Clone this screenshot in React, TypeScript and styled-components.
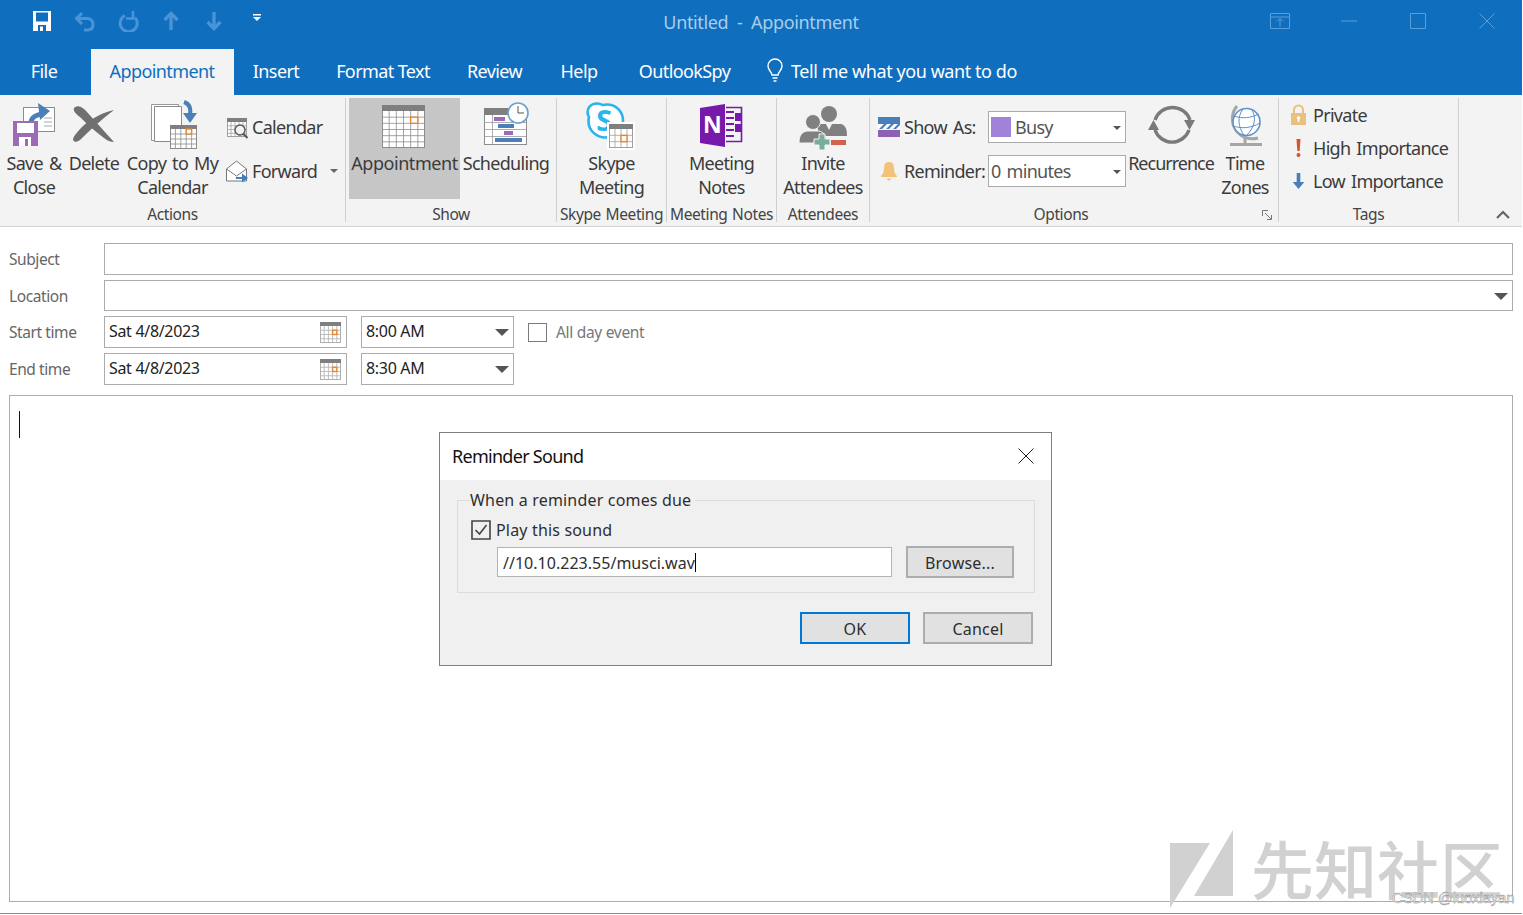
import React from "react";
import styled, { createGlobalStyle } from "styled-components";

const Global = createGlobalStyle`
  html, body { margin: 0; padding: 0; background: #fff; }
  body { font-family: "Noto Sans", "Open Sans", sans-serif; color: #3b3b3b; }
  * { box-sizing: border-box; }
`;

const Window = styled.div`
  position: relative;
  width: 1522px;
  height: 914px;
  background: #fff;
  border-bottom: 1px solid #8a8a8a;
  overflow: hidden;
  display: flex;
  flex-direction: column;
`;

/* ---------- title bar ---------- */
const TitleBar = styled.div`
  height: 49px;
  background: #106ebe;
  display: grid;
  grid-template-columns: 1fr auto 1fr;
  align-items: center;
`;
const Qat = styled.div`
  display: flex;
  gap: 21px;
  padding: 0 0 7px 31px;
`;
const QatIcon = styled.svg`
  width: 22px;
  height: 22px;
  display: block;
`;
const WindowTitle = styled.div`
  font-size: 18px;
  color: #a9cdea;
  white-space: pre;
  padding-bottom: 6px;
  letter-spacing: -0.35px;
`;
const WindowButtons = styled.div`
  display: flex;
  justify-content: flex-end;
  padding: 0 1px 8px 0;
`;
const WindowBtn = styled.div`
  width: 69px;
  height: 22px;
  display: flex;
  align-items: center;
  justify-content: center;
`;

/* ---------- tabs ---------- */
const TabBar = styled.div`
  height: 46px;
  background: #106ebe;
  display: flex;
  align-items: stretch;
`;
const Tab = styled.div<{ $w: number; $active?: boolean; $pr?: number }>`
  width: ${(p) => p.$w}px;
  display: flex;
  align-items: center;
  justify-content: center;
  font-size: 18px;
  letter-spacing: -0.6px;
  white-space: nowrap;
  padding-bottom: 2px;
  padding-right: ${(p) => p.$pr ?? 0}px;
  color: ${(p) => (p.$active ? "#106ebe" : "#fff")};
  background: ${(p) => (p.$active ? "#f3f3f3" : "transparent")};
`;
const TellMe = styled.div`
  display: flex;
  align-items: center;
  gap: 7px;
  margin-left: 14px;
  font-size: 18px;
  letter-spacing: -0.43px;
  color: #fff;
  padding-bottom: 2px;
`;

/* ---------- ribbon ---------- */
const Ribbon = styled.div`
  height: 132px;
  background: #f3f3f3;
  border-bottom: 1px solid #d2d2d2;
  padding-top: 3px;
  display: flex;
  align-items: flex-start;
  font-size: 18px;
  letter-spacing: -0.7px;
  word-spacing: 2px;
  color: #3b3b3b;
`;
const Divider = styled.div`
  width: 1px;
  height: 124px;
  background: #d0d0d0;
  flex: none;
`;
const Group = styled.div<{ $w: number }>`
  position: relative;
  width: ${(p) => p.$w}px;
  height: 128px;
  flex: none;
  display: flex;
  flex-direction: column;
`;
const GroupBody = styled.div<{ $pl?: number }>`
  height: 104px;
  display: flex;
  padding-left: ${(p) => p.$pl ?? 0}px;
`;
const GroupLabel = styled.div<{ $pr?: number }>`
  height: 24px;
  line-height: 24px;
  font-size: 15.5px;
  letter-spacing: -0.4px;
  word-spacing: 1px;
  text-align: center;
  white-space: nowrap;
  padding-right: ${(p) => p.$pr ?? 0}px;
  color: #444;
`;
const LargeBtn = styled.div<{ $w: number; $on?: boolean }>`
  width: ${(p) => p.$w}px;
  height: 101px;
  flex: none;
  display: flex;
  flex-direction: column;
  align-items: center;
  background: ${(p) => (p.$on ? "#c6c6c6" : "transparent")};
`;
const Art = styled.svg`
  display: block;
  height: 54px;
  flex: none;
  overflow: visible;
`;
const LargeText = styled.div<{ $ls?: number }>`
  margin-top: -1px;
  line-height: 24px;
  text-align: center;
  white-space: nowrap;
  ${(p) => (p.$ls !== undefined ? `letter-spacing: ${p.$ls}px;` : "")}
`;
const SmallCol = styled.div`
  display: flex;
  flex-direction: column;
  margin-left: 5px;
  padding-top: 7px;
`;
const SmallRow = styled.div`
  height: 44px;
  display: flex;
  align-items: center;
  gap: 4px;
  white-space: nowrap;
`;
const SmallIcon = styled.svg`
  width: 22px;
  height: 24px;
  display: block;
  flex: none;
  overflow: visible;
`;
const TinyCaret = styled.span`
  width: 0;
  height: 0;
  margin-left: 9px;
  border-left: 4px solid transparent;
  border-right: 4px solid transparent;
  border-top: 4px solid #666;
`;
const OptionCol = styled.div`
  display: flex;
  flex-direction: column;
  gap: 12px;
  padding-top: 13px;
`;
const OptionRow = styled.div`
  height: 32px;
  display: flex;
  align-items: center;
`;
const OptionIcon = styled.svg`
  width: 26px;
  height: 24px;
  flex: none;
  display: block;
`;
const OptionLabel = styled.div`
  width: 84px;
  white-space: nowrap;
`;
const RibbonSelect = styled.div`
  width: 138px;
  height: 32px;
  background: #fff;
  border: 1px solid #ababab;
  display: flex;
  align-items: center;
  padding-left: 2px;
  color: #555;
  position: relative;
`;
const Swatch = styled.span`
  width: 20px;
  height: 20px;
  background: #a083d8;
  margin-right: 4px;
`;
const SelectCaret = styled.span`
  position: absolute;
  right: 4px;
  top: 14px;
  border-left: 4px solid transparent;
  border-right: 4px solid transparent;
  border-top: 4px solid #555;
`;
const Launcher = styled.svg`
  position: absolute;
  right: 6px;
  bottom: 6px;
  width: 10px;
  height: 10px;
`;
const TagCol = styled.div`
  display: flex;
  flex-direction: column;
  padding-top: 0;
`;
const TagRow = styled.div`
  height: 33px;
  display: flex;
  align-items: center;
  gap: 6px;
  white-space: nowrap;
`;
const TagIcon = styled.svg`
  width: 17px;
  height: 22px;
  display: block;
  flex: none;
`;
const CollapseArea = styled.div`
  flex: 1;
  height: 128px;
  display: flex;
  justify-content: flex-end;
  align-items: flex-end;
  padding: 0 12px 7px 0;
`;

/* ---------- form ---------- */
const Form = styled.div`
  flex: 1;
  display: flex;
  flex-direction: column;
  gap: 5px;
  padding: 16px 9px 11px 9px;
  min-height: 0;
`;
const FormRow = styled.div<{ $h?: number }>`
  display: flex;
  align-items: center;
  height: ${(p) => p.$h ?? 32}px;
  flex: none;
`;
const FieldLabel = styled.div`
  width: 95px;
  flex: none;
  font-size: 15.5px;
  letter-spacing: -0.42px;
  color: #666;
`;
const TextBox = styled.div`
  flex: 1;
  height: 100%;
  border: 1px solid #ababab;
  position: relative;
`;
const BoxCaret = styled.span`
  position: absolute;
  right: 4px;
  top: 12px;
  border-left: 7px solid transparent;
  border-right: 7px solid transparent;
  border-top: 7px solid #555;
`;
const DateBox = styled.div`
  width: 243px;
  height: 100%;
  border: 1px solid #ababab;
  display: flex;
  align-items: center;
  justify-content: space-between;
  padding: 0 5px 3px 4px;
  font-size: 16px;
  letter-spacing: -0.32px;
  color: #222;
`;
const DateIcon = styled.svg`
  width: 21px;
  height: 21px;
  display: block;
  margin-top: 3px;
`;
const TimeBox = styled.div`
  position: relative;
  width: 153px;
  height: 100%;
  margin-left: 14px;
  border: 1px solid #ababab;
  display: flex;
  align-items: center;
  padding: 0 0 3px 4px;
  font-size: 16px;
  letter-spacing: -0.32px;
  color: #222;
`;
const Check = styled.span`
  width: 19px;
  height: 19px;
  margin-left: 14px;
  border: 1px solid #7a7a7a;
  background: #fff;
  flex: none;
`;
const CheckText = styled.span`
  margin-left: 9px;
  font-size: 15.5px;
  letter-spacing: -0.3px;
  color: #777;
`;
const Body = styled.div`
  flex: 1;
  margin-top: 5px;
  border: 1px solid #a9aeb5;
  padding: 15px 9px;
  min-height: 0;
`;
const Cursor = styled.div`
  width: 1px;
  height: 27px;
  background: #111;
`;

/* ---------- dialog ---------- */
const Dialog = styled.div`
  position: absolute;
  left: 439px;
  top: 432px;
  width: 613px;
  height: 234px;
  background: #f0f0f0;
  border: 1px solid #7f7f7f;
  display: flex;
  flex-direction: column;
`;
const DialogHead = styled.div`
  height: 47px;
  flex: none;
  background: #fff;
  display: flex;
  align-items: center;
  justify-content: space-between;
  padding: 0 17px 2px 12px;
  font-size: 18px;
  letter-spacing: -0.72px;
  color: #111;
`;
const SoundSet = styled.fieldset`
  margin: 11px 16px 0 17px;
  padding: 0 0 0 13px;
  height: 102px;
  border: 1px solid #dcdcdc;
  display: block;
`;
const SoundLegend = styled.legend`
  padding: 0;
  margin-left: -1px;
  font-size: 16px;
  line-height: 18px;
  letter-spacing: 0.18px;
  color: #2e2e2e;
  padding-right: 4px;
`;
const PlayRow = styled.div`
  display: flex;
  align-items: center;
  gap: 5px;
  margin-top: 11px;
  height: 20px;
  font-size: 16px;
  letter-spacing: 0.17px;
  color: #2e2e2e;
`;
const PlayCheck = styled.svg`
  width: 20px;
  height: 20px;
  display: block;
  flex: none;
`;
const FileRow = styled.div`
  display: flex;
  align-items: center;
  margin: 6px 0 0 26px;
  gap: 14px;
`;
const FileInput = styled.div`
  width: 395px;
  height: 30px;
  background: #fff;
  border: 1px solid #b4b4b4;
  display: flex;
  align-items: center;
  padding: 1px 0 0 5px;
  font-size: 16px;
  letter-spacing: 0.02px;
  color: #2e2e2e;
`;
const TextCaret = styled.span`
  width: 1px;
  height: 19px;
  background: #000;
`;
const DlgButton = styled.div<{ $w: number; $default?: boolean }>`
  width: ${(p) => p.$w}px;
  height: 32px;
  padding-top: 1px;
  background: #e1e1e1;
  border: 2px solid ${(p) => (p.$default ? "#0078d7" : "#adadad")};
  display: flex;
  align-items: center;
  justify-content: center;
  font-size: 16px;
  letter-spacing: 0.2px;
  color: #2e2e2e;
`;
const DialogFoot = styled.div`
  display: flex;
  justify-content: flex-end;
  gap: 13px;
  margin-top: 19px;
  padding-right: 18px;
`;

/* ---------- watermark ---------- */
const Watermark = styled.div`
  position: absolute;
  left: 1170px;
  top: 830px;
  width: 340px;
  height: 84px;
  pointer-events: none;
`;
const WmLogo = styled.svg`
  position: absolute;
  left: 0;
  top: 0;
  width: 64px;
  height: 79px;
`;
const WmText = styled.div`
  position: absolute;
  left: 81px;
  top: -5px;
  font-family: "Noto Sans CJK SC", sans-serif;
  font-size: 63px;
  font-weight: 500;
  line-height: 84px;
  white-space: nowrap;
  color: #d1d1d1;
`;
const WmCsdn = styled.div`
  position: absolute;
  left: 222px;
  top: 59px;
  font-family: "Liberation Sans", sans-serif;
  font-size: 15px;
  letter-spacing: -0.2px;
  white-space: nowrap;
  color: #efefef;
  -webkit-text-stroke: 0.35px #777;
`;

/* ---------- drawings ---------- */
type GridProps = {
  x: number; y: number; w: number; h: number; cols: number; rows: number;
  head?: number; ox?: number; oy?: number; line?: string; headColor?: string;
};
const CalGrid = ({ x, y, w, h, cols, rows, head = 6, ox, oy, line = "#8c8c8c", headColor = "#7f7f7f" }: GridProps) => {
  const cw = w / cols;
  const ch = (h - head) / rows;
  const parts: React.ReactNode[] = [];
  for (let i = 1; i < cols; i++) {
    parts.push(<line key={"c" + i} x1={x + i * cw} x2={x + i * cw} y1={y + head} y2={y + h} stroke={line} strokeWidth={0.8} />);
  }
  for (let j = 1; j < rows; j++) {
    parts.push(<line key={"r" + j} x1={x} x2={x + w} y1={y + head + j * ch} y2={y + head + j * ch} stroke={line} strokeWidth={0.8} />);
  }
  return (
    <g>
      <rect x={x + 0.5} y={y + 0.5} width={w - 1} height={h - 1} fill="#fff" stroke={line} />
      {parts}
      <rect x={x} y={y} width={w} height={head} fill={headColor} />
      {ox !== undefined && oy !== undefined && (
        <rect x={x + ox * cw} y={y + head + oy * ch} width={cw} height={ch} fill="#fff" stroke="#e8872c" strokeWidth={1.4} />
      )}
    </g>
  );
};

const QatColor = "#4a93d6";

export default function App() {
  return (
    <>
      <Global />
      <Window>
        <TitleBar>
          <Qat>
            <QatIcon viewBox="0 0 22 22">
              <path d="M2 1h18v20H2z" fill="#fff" />
              <path d="M5 2.500h12v9H5z" fill="#106ebe" />
              <path d="M7 15h8v6H7z" fill="#106ebe" />
              <path d="M9 16.500h3V21H9z" fill="#fff" />
            </QatIcon>
            <QatIcon viewBox="0 0 22 22" fill="none" stroke={QatColor} strokeWidth={3}>
              <path d="M8 3 2.500 8.500 8 14" />
              <path d="M3 8.500h10c4 0 6 2.700 6 6s-2 5.500-5.500 5.500H10" />
            </QatIcon>
            <QatIcon viewBox="0 0 22 22" fill="none" stroke={QatColor} strokeWidth={3}>
              <path d="M8 5.500A8.500 8.500 0 1 0 18 7.500" />
              <path d="M16 1v7.500H9" strokeWidth={2.6} />
            </QatIcon>
            <QatIcon viewBox="0 0 22 22" fill="none" stroke={QatColor} strokeWidth={3.4}>
              <path d="M11 20V4" />
              <path d="M4.500 10 11 3.500 17.500 10" />
            </QatIcon>
            <QatIcon viewBox="0 0 22 22" fill="none" stroke={QatColor} strokeWidth={3.4}>
              <path d="M11 2v16" />
              <path d="M4.500 12 11 18.500 17.500 12" />
            </QatIcon>
            <QatIcon viewBox="0 0 22 22">
              <path d="M7 4h8v1.500H7zM7 7h8l-4 4z" fill="#fff" />
            </QatIcon>
          </Qat>
          <WindowTitle>{"Untitled  -  Appointment"}</WindowTitle>
          <WindowButtons>
            <WindowBtn>
              <svg width="20" height="16" viewBox="0 0 20 16" fill="none" stroke="#5b9fd9">
                <path d="M.5.500h19v15H.5zM.5 4h19M10 14V6M7 8.500 10 5.500 13 8.500" />
              </svg>
            </WindowBtn>
            <WindowBtn>
              <svg width="16" height="2" viewBox="0 0 16 2"><path d="M0 1h16" stroke="#5b9fd9" /></svg>
            </WindowBtn>
            <WindowBtn>
              <svg width="16" height="16" viewBox="0 0 16 16" fill="none"><path d="M.5.500h15v15H.5z" stroke="#5b9fd9" /></svg>
            </WindowBtn>
            <WindowBtn>
              <svg width="16" height="16" viewBox="0 0 16 16" fill="none"><path d="M.5.500l15 15M15.500.500l-15 15" stroke="#5b9fd9" /></svg>
            </WindowBtn>
          </WindowButtons>
        </TitleBar>

        <TabBar>
          <Tab $w={91} $pr={3}>File</Tab>
          <Tab $w={143} $pr={1} $active>Appointment</Tab>
          <Tab $w={84}>Insert</Tab>
          <Tab $w={130}>Format Text</Tab>
          <Tab $w={93}>Review</Tab>
          <Tab $w={76}>Help</Tab>
          <Tab $w={135}>OutlookSpy</Tab>
          <TellMe>
            <svg width="18" height="26" viewBox="0 0 18 26" fill="none" stroke="#fff" strokeWidth={1.4}>
              <path d="M6 17c0-3-4-4.500-4-9a7 7 0 0 1 14 0c0 4.500-4 6-4 9z" />
              <path d="M6.500 20h5M7.500 23h3" />
            </svg>
            Tell me what you want to do
          </TellMe>
        </TabBar>

        <Ribbon>
          <Group $w={345}>
            <GroupBody $pl={4}>
              <LargeBtn $w={60}>
                <Art width={60} viewBox="4 98 60 54">
                  <rect x="23.500" y="107.500" width="31" height="24" fill="#fff" stroke="#8c8c8c" />
                  <path d="M44 118h8M44 122h8M44 126h8" stroke="#aaa" />
                  <path d="M31 123c0-6 6-9 13-9" fill="none" stroke="#4a7fb9" strokeWidth={5} />
                  <path d="M38 103l12 8-10 9z" fill="#4a7fb9" />
                  <path d="M13 121h25v25H13z" fill="#9b6bb8" />
                  <path d="M17 123h17v10H17zM19 137h12v9H19z" fill="#fff" />
                  <path d="M25 139h3v7h-3z" fill="#9b6bb8" />
                </Art>
                <LargeText>Save &amp;<br />Close</LargeText>
              </LargeBtn>
              <LargeBtn $w={60}>
                <Art width={60} viewBox="64 98 60 54">
                  <path d="M74 108c4-4 9-1 13 4 8 9 17 19 27 30-3 0-6-1-10-4-8-6-17-14-24-21-4-3-7-6-6-9z" fill="#707070" />
                  <path d="M114 110c-10 2-22 8-31 16-3 3-9 9-10 13 0 3 3 4 7 1 11-11 22-21 34-30z" fill="#707070" />
                </Art>
                <LargeText>Delete</LargeText>
              </LargeBtn>
              <LargeBtn $w={97}>
                <Art width={97} viewBox="124 98 97 54">
                  <path d="M151.500 104.500h27v36h-27z" fill="#fff" stroke="#999" />
                  <path d="M154.500 106.500h27v35h-27z" fill="#fff" stroke="#8a8a8a" />
                  <path d="M184 102c6 2 7 7 6 13" fill="none" stroke="#4a7fb9" strokeWidth={4} />
                  <path d="M183 113h14l-7 10z" fill="#4a7fb9" />
                  <CalGrid x={170} y={125} w={27} h={24} cols={5} rows={4} head={4} ox={3} oy={0} />
                </Art>
                <LargeText>Copy to My<br />Calendar</LargeText>
              </LargeBtn>
              <SmallCol>
                <SmallRow>
                  <SmallIcon viewBox="226 115 22 24">
                    <CalGrid x={227} y={118} w={20} h={19} cols={5} rows={4} head={4} line="#a0a0a0" />
                    <circle cx="240" cy="130" r="5" fill="#f3f3f3" stroke="#555" strokeWidth={1.4} />
                    <path d="M243.500 134l4 4" stroke="#555" strokeWidth={2} />
                  </SmallIcon>
                  Calendar
                </SmallRow>
                <SmallRow>
                  <SmallIcon viewBox="226 160 22 24">
                    <path d="M226.500 170l10-8 10 8v12h-20z" fill="#fff" stroke="#777" />
                    <path d="M226.500 170l10 7 10-7" fill="none" stroke="#777" />
                    <path d="M236 179h8" stroke="#3f7fc0" strokeWidth={2} />
                    <path d="M242 174.500l6 4.500-6 4.500z" fill="#3f7fc0" />
                  </SmallIcon>
                  Forward
                  <TinyCaret />
                </SmallRow>
              </SmallCol>
            </GroupBody>
            <GroupLabel>Actions</GroupLabel>
          </Group>
          <Divider />

          <Group $w={210}>
            <GroupBody $pl={3}>
              <LargeBtn $w={111} $on>
                <Art width={111} viewBox="349 98 111 54">
                  <CalGrid x={382} y={105} w={43} h={43} cols={6} rows={6} head={6} ox={4} oy={1} />
                </Art>
                <LargeText $ls={-0.45}>Appointment</LargeText>
              </LargeBtn>
              <LargeBtn $w={92}>
                <Art width={92} viewBox="460 98 92 54">
                  <rect x="484.500" y="108.500" width="42" height="36" fill="#fff" stroke="#8c8c8c" />
                  <path d="M484 108h24v7h-24z" fill="#7f7f7f" />
                  <path d="M484 122.500h42M484 129.500h42M484 136.500h42M492.500 115v30" stroke="#999" strokeWidth={0.8} />
                  <path d="M494 117h11v4h-11zM504 131h9v4h-9z" fill="#9b6bb8" />
                  <path d="M498 124h16v4h-16zM495 138h27v4h-27z" fill="#4a7fb9" />
                  <circle cx="518" cy="113" r="10" fill="#fff" stroke="#6f9fd0" strokeWidth={1.6} />
                  <path d="M518 106v7h6" fill="none" stroke="#555" />
                </Art>
                <LargeText>Scheduling</LargeText>
              </LargeBtn>
            </GroupBody>
            <GroupLabel>Show</GroupLabel>
          </Group>
          <Divider />

          <Group $w={109}>
            <GroupBody>
              <LargeBtn $w={109}>
                <Art width={109} viewBox="557 98 109 54">
                  <path d="M597 103.500c-6 0-9.500 4-9.500 8.500 0 2 .5 3.500 1.500 5-.5 1.500-.5 3-.5 4.500 0 9 8 16 17 16 2 0 3-.2 4-.5 1.500 1 3.500 1.500 5.500 1.500 5 0 9-4 9-9 0-2-.5-3.500-1.500-5 .3-1.500.5-2.500.5-4 0-9-7-16-16-16-1.500 0-3 .2-4.500.5-1.500-1-3.500-1.500-5.500-1.500z" fill="#fff" stroke="#28b4ed" strokeWidth={2.6} />
                  <text x="604" y="131" textAnchor="middle" fontFamily="Noto Sans" fontWeight="700" fontSize="29" fill="#28b4ed">S</text>
                  <rect x="607" y="122" width="28" height="28" fill="#fff" />
                  <CalGrid x={609} y={124} w={24} h={24} cols={4} rows={3} head={5} ox={2} oy={1} line="#a0a0a0" />
                </Art>
                <LargeText>Skype<br />Meeting</LargeText>
              </LargeBtn>
            </GroupBody>
            <GroupLabel>Skype Meeting</GroupLabel>
          </Group>
          <Divider />

          <Group $w={109}>
            <GroupBody>
              <LargeBtn $w={109}>
                <Art width={109} viewBox="667 98 109 54">
                  <path d="M726 107.500h15.500v34H726" fill="none" stroke="#7719aa" strokeWidth={1.6} />
                  <path d="M726 112h8M726 118h8M726 124h8M726 130h8M726 136h8" stroke="#7719aa" strokeWidth={2} />
                  <path d="M735 113h6v8h-6zM735 124h6v8h-6z" fill="#7719aa" />
                  <path d="M700 108l25-4v43l-25-4z" fill="#7719aa" />
                  <text x="712" y="133" textAnchor="middle" fontFamily="Noto Sans" fontWeight="700" fontSize="23" fill="#fff">N</text>
                </Art>
                <LargeText>Meeting<br />Notes</LargeText>
              </LargeBtn>
            </GroupBody>
            <GroupLabel>Meeting Notes</GroupLabel>
          </Group>
          <Divider />

          <Group $w={92}>
            <GroupBody>
              <LargeBtn $w={92}>
                <Art width={92} viewBox="777 98 92 54">
                  <circle cx="829" cy="114" r="8" fill="#808080" />
                  <path d="M817 124h24c4 1 6 4 6 12h-28z" fill="#808080" />
                  <path d="M826 124l3 6 3-6z" fill="#f3f3f3" />
                  <circle cx="813" cy="122" r="7.500" fill="#808080" stroke="#f3f3f3" />
                  <path d="M799 143c0-8 3-11 8-12h12c4 1 7 3 8 12z" fill="#808080" stroke="#f3f3f3" />
                  <path d="M819 134h6v5h5v6h-5v5h-6v-5h-5v-6h5z" fill="#78ae9a" stroke="#f3f3f3" />
                  <path d="M831 140h15v5h-15z" fill="#d0634a" />
                </Art>
                <LargeText>Invite<br />Attendees</LargeText>
              </LargeBtn>
            </GroupBody>
            <GroupLabel>Attendees</GroupLabel>
          </Group>
          <Divider />

          <Group $w={408}>
            <GroupBody $pl={8}>
              <OptionCol>
                <OptionRow>
                  <OptionIcon viewBox="0 0 26 24">
                    <path d="M0 2h22v7H0z" fill="#4a7ebb" />
                    <path d="M0 9h22v5H0z" fill="#fff" />
                    <path d="M1 14l5-5h3l-5 5zM8 14l5-5h3l-5 5zM15 14l5-5h2v1l-4 4z" fill="#4a7ebb" />
                    <path d="M0 15h22v7H0z" fill="#8f5fb3" />
                  </OptionIcon>
                  <OptionLabel>Show As:</OptionLabel>
                  <RibbonSelect>
                    <Swatch />
                    Busy
                    <SelectCaret />
                  </RibbonSelect>
                </OptionRow>
                <OptionRow>
                  <OptionIcon viewBox="0 0 26 24">
                    <path d="M11 3c4 0 5 3 5 6 0 4 1 6 3 8v1H3v-1c2-2 3-4 3-8 0-3 1-6 5-6z" fill="#f2c27a" />
                    <path d="M8.500 19.500h5L11 22z" fill="#f2c27a" />
                  </OptionIcon>
                  <OptionLabel>Reminder:</OptionLabel>
                  <RibbonSelect>
                    0 minutes
                    <SelectCaret />
                  </RibbonSelect>
                </OptionRow>
              </OptionCol>
              <LargeBtn $w={90}>
                <Art width={90} viewBox="1126 98 90 54">
                  <path d="M1155 120A18.500 18.500 0 0 1 1190 120" fill="none" stroke="#7a7a7a" strokeWidth={3.4} />
                  <path d="M1155 130A18 18 0 0 0 1189 130" fill="none" stroke="#7a7a7a" strokeWidth={3.4} />
                  <path d="M1184 120h11l-5.500 10zM1148 130h11l-5.500-10z" fill="#7a7a7a" />
                </Art>
                <LargeText $ls={-1}>Recurrence</LargeText>
              </LargeBtn>
              <LargeBtn $w={58}>
                <Art width={58} viewBox="1216 98 58 54">
                  <path d="M1237 106A20 20 0 0 0 1258 138" fill="none" stroke="#a6a6a6" strokeWidth={3} />
                  <path d="M1245 137v8M1230 144.500h32" stroke="#a6a6a6" strokeWidth={3} />
                  <circle cx="1246.500" cy="122" r="13.500" fill="#fff" stroke="#5b92cc" strokeWidth={1.6} />
                  <path d="M1234 116c8 3 17 2 25-2M1233 126c9 3 18 2 27-3M1243 109c-6 8-5 18 1 26M1252 110c5 8 2 18-5 25" fill="none" stroke="#5b92cc" />
                </Art>
                <LargeText>Time<br />Zones</LargeText>
              </LargeBtn>
            </GroupBody>
            <GroupLabel $pr={26}>Options</GroupLabel>
            <Launcher viewBox="0 0 10 10" fill="none" stroke="#777">
              <path d="M.5 6V.500H6" />
              <path d="M3 3l6 6M5 9.500h4.500V5" />
            </Launcher>
          </Group>
          <Divider />

          <Group $w={179}>
            <GroupBody $pl={11}>
              <TagCol>
                <TagRow>
                  <TagIcon viewBox="0 0 17 22">
                    <path d="M4 9V6a4.500 4.500 0 0 1 9 0v3" fill="none" stroke="#eac07f" strokeWidth={2} />
                    <path d="M1 9h15v12H1z" fill="#eac07f" />
                    <circle cx="8.500" cy="14" r="1.800" fill="#fff" />
                    <path d="M7.700 14h1.600v4H7.700z" fill="#fff" />
                  </TagIcon>
                  Private
                </TagRow>
                <TagRow>
                  <TagIcon viewBox="0 0 17 22">
                    <path d="M6.500 2h4l-.8 12H7.300z" fill="#d9542b" />
                    <circle cx="8.500" cy="18" r="2" fill="#d9542b" />
                  </TagIcon>
                  High Importance
                </TagRow>
                <TagRow>
                  <TagIcon viewBox="0 0 17 22">
                    <path d="M6.700 3h3.600v9h4l-5.800 7-5.800-7h4z" fill="#4a7ebb" />
                  </TagIcon>
                  Low Importance
                </TagRow>
              </TagCol>
            </GroupBody>
            <GroupLabel>Tags</GroupLabel>
          </Group>
          <Divider />
          <CollapseArea>
            <svg width="14" height="9" viewBox="0 0 14 9" fill="none" stroke="#666" strokeWidth={2.2}>
              <path d="M1 8l6-6 6 6" />
            </svg>
          </CollapseArea>
        </Ribbon>

        <Form>
          <FormRow>
            <FieldLabel>Subject</FieldLabel>
            <TextBox />
          </FormRow>
          <FormRow $h={31}>
            <FieldLabel>Location</FieldLabel>
            <TextBox><BoxCaret /></TextBox>
          </FormRow>
          <FormRow>
            <FieldLabel>Start time</FieldLabel>
            <DateBox>
              Sat 4/8/2023
              <DateIcon viewBox="0 0 21 21"><CalGrid x={0} y={0} w={21} h={21} cols={5} rows={4} head={4} ox={3} oy={1} line="#b0b0b0" /></DateIcon>
            </DateBox>
            <TimeBox>8:00 AM<BoxCaret /></TimeBox>
            <Check />
            <CheckText>All day event</CheckText>
          </FormRow>
          <FormRow>
            <FieldLabel>End time</FieldLabel>
            <DateBox>
              Sat 4/8/2023
              <DateIcon viewBox="0 0 21 21"><CalGrid x={0} y={0} w={21} h={21} cols={5} rows={4} head={4} ox={3} oy={1} line="#b0b0b0" /></DateIcon>
            </DateBox>
            <TimeBox>8:30 AM<BoxCaret /></TimeBox>
          </FormRow>
          <Body><Cursor /></Body>
        </Form>

        <Dialog>
          <DialogHead>
            Reminder Sound
            <svg width="16" height="16" viewBox="0 0 16 16" fill="none" stroke="#222"><path d="M.5.500l15 15M15.500.500l-15 15" /></svg>
          </DialogHead>
          <SoundSet>
            <SoundLegend>When a reminder comes due</SoundLegend>
            <PlayRow>
              <PlayCheck viewBox="0 0 20 20" fill="none">
                <path d="M1 1h18v18H1z" stroke="#444" strokeWidth={1.6} />
                <path d="M4.500 10l4 4 7-9" stroke="#444" strokeWidth={1.6} />
              </PlayCheck>
              Play this sound
            </PlayRow>
            <FileRow>
              <FileInput>//10.10.223.55/musci.wav<TextCaret /></FileInput>
              <DlgButton $w={108}>Browse...</DlgButton>
            </FileRow>
          </SoundSet>
          <DialogFoot>
            <DlgButton $w={110} $default>OK</DlgButton>
            <DlgButton $w={110}>Cancel</DlgButton>
          </DialogFoot>
        </Dialog>

        <Watermark>
          <WmLogo viewBox="0 0 64 79">
            <path d="M0 13h40L0 78zM63 0v66H24z" fill="#d1d1d1" />
          </WmLogo>
          <WmText>先知社区</WmText>
          <WmCsdn>CSDN @luoxiayan</WmCsdn>
        </Watermark>
      </Window>
    </>
  );
}
